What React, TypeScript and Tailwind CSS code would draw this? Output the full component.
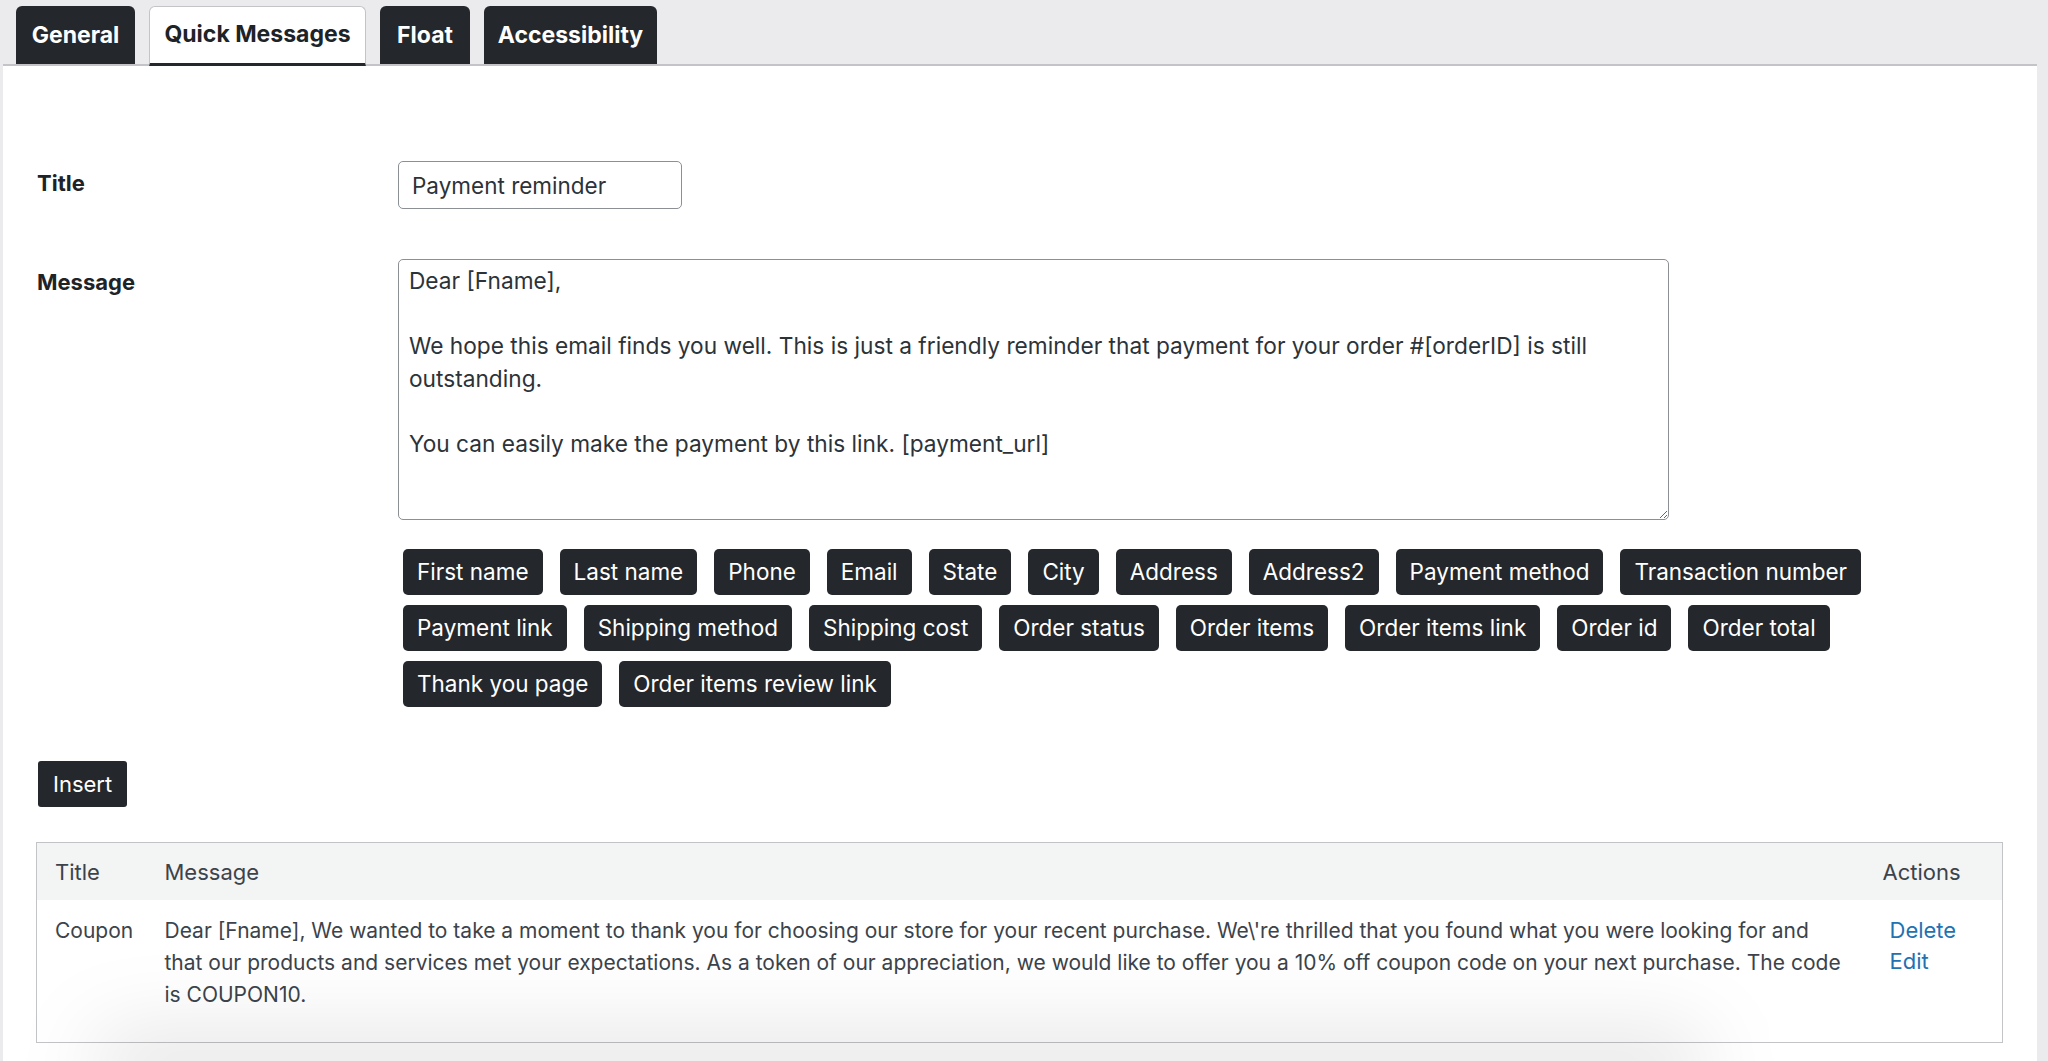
import React from 'react';

const tabs = [
  { label: 'General', width: 'w-[119px]' },
  { label: 'Quick Messages', width: 'w-[217px]' },
  { label: 'Float', width: 'w-[90px]' },
  { label: 'Accessibility', width: 'w-[173px]' },
];

const tags = [
  'First name',
  'Last name',
  'Phone',
  'Email',
  'State',
  'City',
  'Address',
  'Address2',
  'Payment method',
  'Transaction number',
  'Payment link',
  'Shipping method',
  'Shipping cost',
  'Order status',
  'Order items',
  'Order items link',
  'Order id',
  'Order total',
  'Thank you page',
  'Order items review link',
];

const messageText = `Dear [Fname],

We hope this email finds you well. This is just a friendly reminder that payment for your order #[orderID] is still outstanding.

You can easily make the payment by this link. [payment_url]`;

const savedMessages = [
  {
    id: 1,
    title: 'Coupon',
    message:
      "Dear [Fname], We wanted to take a moment to thank you for choosing our store for your recent purchase. We\\'re thrilled that you found what you were looking for and that our products and services met your expectations. As a token of our appreciation, we would like to offer you a 10% off coupon code on your next purchase. The code is COUPON10.",
  },
];

export default function App() {
  return (
    <div className="relative h-[1061px] overflow-hidden bg-[#ebebed] font-['Inter','Liberation_Sans',sans-serif] text-[#2c3338]">
      <div className="ml-[3px] w-[2034px]">
        {/* Tabs */}
        <nav className="flex items-end gap-[14px] border-b-2 border-[#c3c4c7] pl-[13px] pt-[6px]">
          {tabs.map((tab) =>
            tab.label === 'Quick Messages' ? (
              <button
                key={tab.label}
                className={`${tab.width} relative z-10 -mb-[2px] h-[60px] rounded-t-[6px] border border-b-[3px] border-[#c3c4c7] border-b-[#24282c] bg-white pb-[2px] text-center text-[23px] font-bold text-[#1d2327]`}
              >
                {tab.label}
              </button>
            ) : (
              <button
                key={tab.label}
                className={`${tab.width} h-[58px] rounded-t-[6px] bg-[#24282c] text-center text-[23px] font-bold text-white`}
              >
                {tab.label}
              </button>
            )
          )}
        </nav>

        {/* Panel */}
        <main className="h-[995px] bg-white pl-[34px] pt-[95px]">
          <div className="grid grid-cols-[361px_1fr] gap-y-[50px]">
            <label className="mt-[7px] text-[22px] font-bold leading-[30px] text-[#1d2327]">
              Title
            </label>
            <input
              type="text"
              defaultValue="Payment reminder"
              className="h-[48px] w-[284px] rounded-[5px] border border-[#8c8f94] px-[13px] text-[22.5px] text-[#2c3338] outline-none"
            />

            <label className="mt-[8px] text-[22px] font-bold leading-[30px] text-[#1d2327]">
              Message
            </label>
            <div>
              <textarea
                defaultValue={messageText}
                className="block h-[261px] w-[1271px] resize-y rounded-[5px] border border-[#8c8f94] px-[10px] pt-[5px] text-[22.7px] leading-[32.5px] text-[#2c3338] outline-none"
              />
              <div className="ml-[5px] mt-[29px] flex w-[1590px] flex-wrap gap-x-[17px] gap-y-[10px]">
                {tags.map((tag) => (
                  <button
                    key={tag}
                    className="h-[46px] rounded-[5px] bg-[#24282c] px-[14px] text-[22.5px] text-white"
                  >
                    {tag}
                  </button>
                ))}
              </div>
            </div>
          </div>

          <button className="ml-[1px] mt-[54px] h-[46px] rounded-[3px] bg-[#24282c] px-[15px] text-[22px] text-white">
            Insert
          </button>

          {/* Saved messages */}
          <table className="-ml-[1px] mt-[35px] w-[1967px] table-fixed border border-[#c3c4c7] text-left text-[22px] leading-[32px] text-[#3c434a]">
            <colgroup>
              <col className="w-[128px]" />
              <col />
              <col className="w-[133px]" />
            </colgroup>
            <thead className="bg-[#f3f4f4]">
              <tr>
                <th className="pb-[12px] pl-[18px] pt-[13px] font-normal">Title</th>
                <th className="pb-[12px] pr-[18px] pt-[13px] font-normal">Message</th>
                <th className="pb-[12px] pl-[13px] pt-[13px] font-normal">Actions</th>
              </tr>
            </thead>
            <tbody>
              {savedMessages.map((row) => (
                <tr key={row.id}>
                  <td className="pb-[31px] pl-[18px] pt-[15px] align-top text-[21px]">{row.title}</td>
                  <td className="pb-[31px] pr-[18px] pt-[15px] align-top text-[21px]">{row.message}</td>
                  <td className="pb-[31px] pl-[20px] pt-[15px] align-top leading-[31px]">
                    <a href="#" className="block w-fit text-[#2271b1]">
                      Delete
                    </a>
                    <a href="#" className="block w-fit text-[#2271b1]">
                      Edit
                    </a>
                  </td>
                </tr>
              ))}
            </tbody>
          </table>
        </main>
      </div>

      {/* soft shadow at the bottom edge */}
      <div className="pointer-events-none absolute left-[90px] top-[1030px] h-[70px] w-[1620px] rounded-full bg-black/10 blur-2xl" />
    </div>
  );
}
